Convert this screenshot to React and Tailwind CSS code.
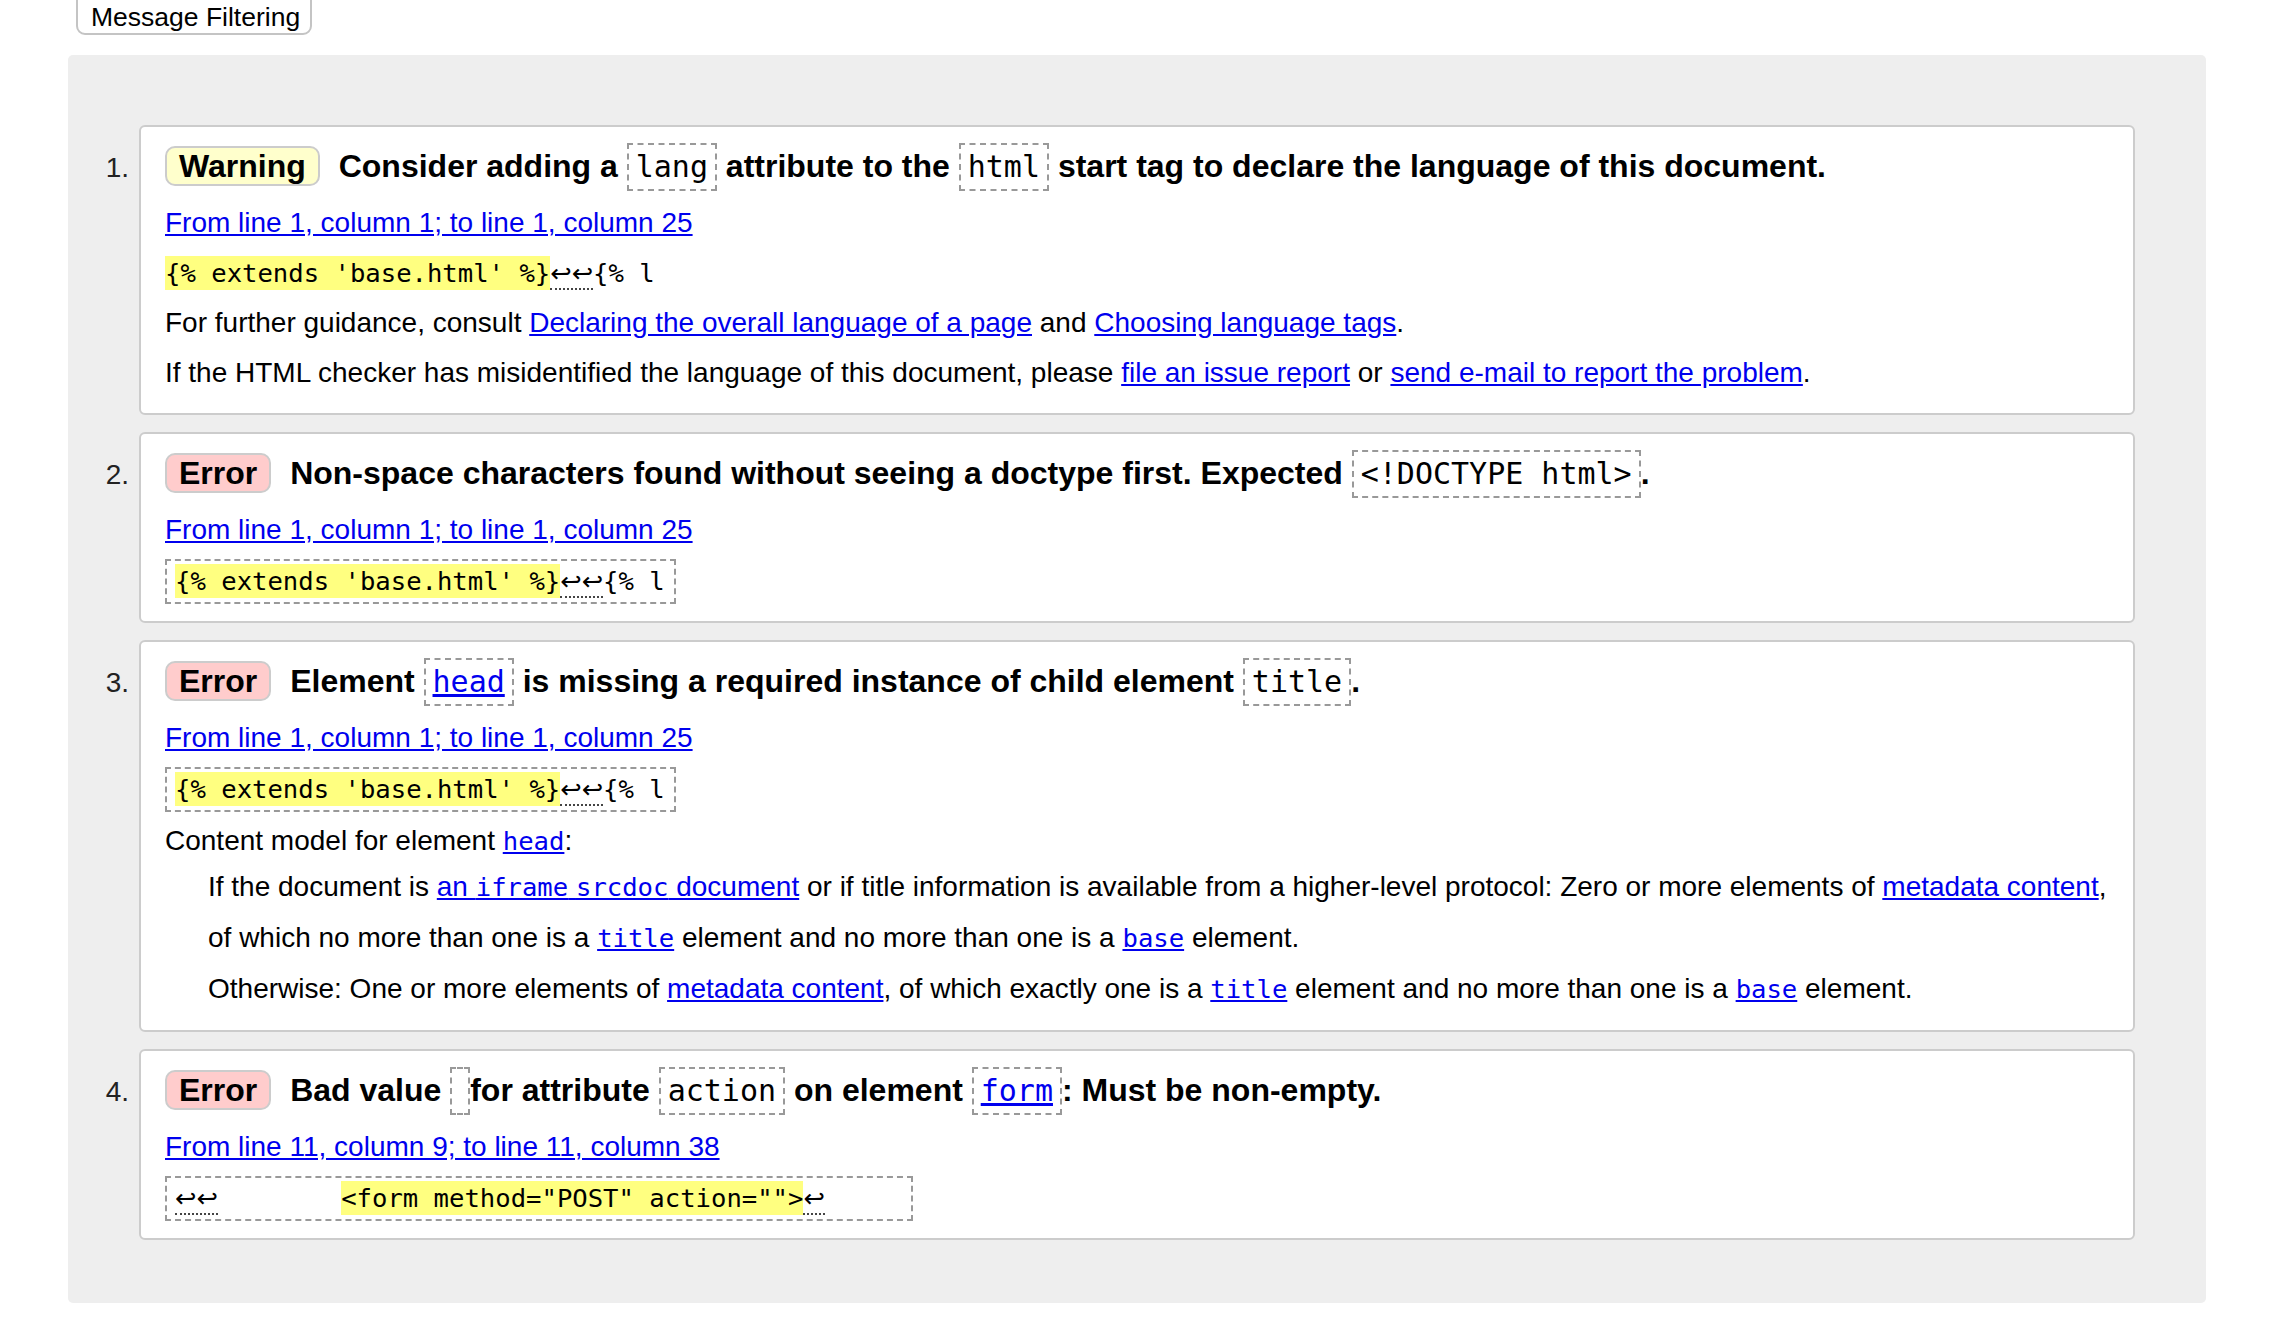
import React from 'react';

const sans = "font-['Liberation_Sans',Arial,sans-serif]";
const mono = "font-['DejaVu_Sans_Mono','Liberation_Mono',monospace]";

function Badge({ kind }) {
  const bg = kind === 'Warning' ? 'bg-[#ffffcc]' : 'bg-[#ffcccc]';
  return (
    <span className={`inline-block h-[40px] leading-[36px] px-[12px] mr-[10px] border-2 border-[#cccccc] rounded-[10px] ${bg}`}>
      {kind}
    </span>
  );
}

// code in the bold heading line (dashed box)
function HCode({ children, empty }) {
  return (
    <code className={`inline-block border-2 border-dashed border-[#999999] leading-[44px] text-[30px] font-normal ${mono} ${empty ? 'w-[20px]' : 'px-[7px]'}`}>
      {empty ? '\u200B' : children}
    </code>
  );
}

// inline code inside body text
function C({ children }) {
  return <code className={`${mono} text-[25.6px] leading-none`}>{children}</code>;
}

function A({ children }) {
  return <a href="#" className="text-[#0000ee] underline">{children}</a>;
}

function Hi({ children }) {
  return <span className="inline-block leading-[34px] bg-[#ffff80]">{children}</span>;
}

function Lf({ n = 2 }) {
  return (
    <span className="font-['DejaVu_Sans',sans-serif] border-b-2 border-dotted border-[#444444]">
      {'\u21A9'.repeat(n)}
    </span>
  );
}

function Extract({ children }) {
  return (
    <div className={`mt-[4px] mb-[2px] w-fit border-2 border-dashed border-[#999999] pl-[8px] pr-[9px] pt-[3px] pb-[4px] text-[25.6px] leading-[34px] whitespace-pre ${mono}`}>
      {children}
    </div>
  );
}

function Location({ children }) {
  return (
    <p className="leading-[50px]">
      <A>{children}</A>
    </p>
  );
}

function Message({ n, children }) {
  return (
    <li className="flex items-baseline">
      <span className="w-[71px] shrink-0 pr-[10px] text-right text-[28px] text-[#222222]">{n}.</span>
      <div className="flex-1 bg-white border-2 border-[#cccccc] rounded-[6px] pl-[24px] pr-[24px] pt-[15px] pb-[15px]">
        {children}
      </div>
    </li>
  );
}

function Heading({ kind, children }) {
  return (
    <p className="text-[32px] font-bold leading-[48px] mb-[7px]">
      <Badge kind={kind} /> {children}
    </p>
  );
}

export default function App() {
  return (
    <div className={`min-h-[1335px] bg-white text-black text-[28px] ${sans}`}>
      <div className="ml-[76px] -mt-[8px]">
        <button className="border-2 border-[#c4c4c4] rounded-[9px] bg-white pt-[8px] pb-[1px] pl-[13px] pr-[10px] text-[26.5px] leading-[30px] text-black">
          Message Filtering
        </button>
      </div>

      <div className="mt-[17px] ml-[68px] w-[2138px] bg-[#eeeeee] rounded-[5px] pt-[70px] pr-[71px] pb-[63px]">
        <ol className="flex flex-col gap-[17px]">
          <Message n={1}>
            <Heading kind="Warning">
              Consider adding a <HCode>lang</HCode> attribute to the <HCode>html</HCode> start tag to declare the language of this document.
            </Heading>
            <Location>From line 1, column 1; to line 1, column 25</Location>
            <div className={`text-[25.6px] leading-[50px] whitespace-pre ${mono}`}>
              <Hi>{"{% extends 'base.html' %}"}</Hi>
              <Lf />
              {'{% l'}
            </div>
            <p className="leading-[50px]">
              For further guidance, consult <A>Declaring the overall language of a page</A> and <A>Choosing language tags</A>.
            </p>
            <p className="leading-[50px]">
              If the HTML checker has misidentified the language of this document, please <A>file an issue report</A> or <A>send e-mail to report the problem</A>.
            </p>
          </Message>

          <Message n={2}>
            <Heading kind="Error">
              Non-space characters found without seeing a doctype first. Expected <HCode>{'<!DOCTYPE html>'}</HCode>.
            </Heading>
            <Location>From line 1, column 1; to line 1, column 25</Location>
            <Extract>
              <Hi>{"{% extends 'base.html' %}"}</Hi>
              <Lf />
              {'{% l'}
            </Extract>
          </Message>

          <Message n={3}>
            <Heading kind="Error">
              Element <HCode><A>head</A></HCode> is missing a required instance of child element <HCode>title</HCode>.
            </Heading>
            <Location>From line 1, column 1; to line 1, column 25</Location>
            <Extract>
              <Hi>{"{% extends 'base.html' %}"}</Hi>
              <Lf />
              {'{% l'}
            </Extract>
            <p className="mt-[9px] leading-[40px]">
              Content model for element <A><C>head</C></A>:
            </p>
            <div className="ml-[43px]">
              <p className="leading-[51px]">
                If the document is <A>an <C>iframe</C> <C>srcdoc</C> document</A> or if title information is available from a higher-level protocol: Zero or more elements of <A>metadata content</A>, of which no more than one is a <A><C>title</C></A> element and no more than one is a <A><C>base</C></A> element.
              </p>
              <p className="leading-[52px]">
                Otherwise: One or more elements of <A>metadata content</A>, of which exactly one is a <A><C>title</C></A> element and no more than one is a <A><C>base</C></A> element.
              </p>
            </div>
          </Message>

          <Message n={4}>
            <Heading kind="Error">
              Bad value <HCode empty />for attribute <HCode>action</HCode> on element <HCode><A>form</A></HCode>: Must be non-empty.
            </Heading>
            <Location>From line 11, column 9; to line 11, column 38</Location>
            <Extract>
              <Lf />
              {'        '}
              <Hi>{'<form method="POST" action="">'}</Hi>
              <Lf n={1} />
              {'     '}
            </Extract>
          </Message>
        </ol>
      </div>
    </div>
  );
}
